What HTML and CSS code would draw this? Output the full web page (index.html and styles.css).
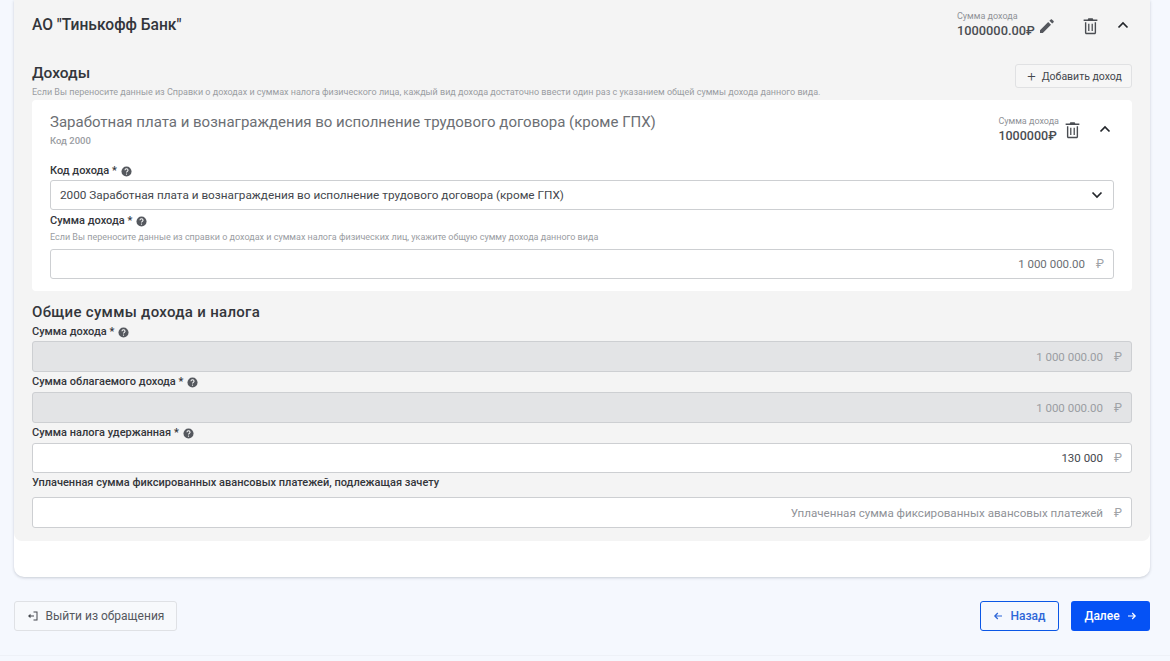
FILE: index.html
```html
<!DOCTYPE html>
<html lang="ru">
<head>
<meta charset="utf-8">
<title>Доходы</title>
<link rel="stylesheet" href="styles.css">
</head>
<body>
<svg class="defs" width="0" height="0" aria-hidden="true">
  <symbol id="trash" viewBox="0 0 14 16"><path d="M5 .8h4l.6 1.2H13.400v1.400H.6V2H4.400zM1.800 4.400v9.800c0 .8.600 1.400 1.400 1.400h7.600c.8 0 1.400-.6 1.400-1.400V4.400h-1.300v9.600c0 .2-.1.300-.3.300H3.400c-.2 0-.3-.1-.3-.3V4.400zM4.800 5.800v6.800h1.200V5.800zM8 5.800v6.800h1.200V5.800z" fill="currentColor"/></symbol>
  <symbol id="up" viewBox="0 0 12 8"><path d="M1.500 6.500 6 2l4.500 4.500" fill="none" stroke="currentColor" stroke-width="1.700"/></symbol>
  <symbol id="help" viewBox="0 0 12 12"><circle cx="6" cy="6" r="5.500" fill="#55585e"/><path d="M4.300 4.700c0-1 .8-1.600 1.700-1.600s1.700.6 1.700 1.500c0 1.200-1.700 1.200-1.700 2.500" fill="none" stroke="#fff" stroke-width="1.100"/><circle cx="6" cy="8.800" r=".7" fill="#fff"/></symbol>
</svg>
<main class="page">
  <section class="card">
    <div class="panel">
      <header class="org">
        <h1 class="org-title">АО "Тинькофф Банк"</h1>
        <div class="org-side">
          <div class="amount amount-org">
            <span class="amount-label">Сумма дохода</span>
            <strong class="amount-value">1000000.00₽</strong>
          </div>
          <svg class="ico-pencil" viewBox="0 0 16 16"><path d="M1 12.200V15h2.800l8.200-8.200-2.800-2.800zM14.600 4.200c.3-.3.300-.8 0-1.100l-1.700-1.700c-.3-.3-.8-.3-1.100 0l-1.400 1.400 2.800 2.800z" fill="#55585e"/></svg>
          <svg class="ico-trash trash-org"><use href="#trash"/></svg>
          <svg class="ico-up up-org"><use href="#up"/></svg>
        </div>
      </header>

      <div class="section-head">
        <div>
          <h2 class="section-title">Доходы</h2>
          <p class="section-hint">Если Вы переносите данные из Справки о доходах и суммах налога физического лица, каждый вид дохода достаточно ввести один раз с указанием общей суммы дохода данного вида.</p>
        </div>
        <button class="btn btn-add"><span class="plus">+</span>Добавить доход</button>
      </div>

      <article class="income">
        <div class="income-head">
          <div>
            <h3 class="income-title">Заработная плата и вознаграждения во исполнение трудового договора (кроме ГПХ)</h3>
            <div class="income-code">Код 2000</div>
          </div>
          <div class="income-side">
            <div class="amount amount-income">
              <span class="amount-label">Сумма дохода</span>
              <strong class="amount-value">1000000₽</strong>
            </div>
            <svg class="ico-trash trash-income"><use href="#trash"/></svg>
            <svg class="ico-up up-income"><use href="#up"/></svg>
          </div>
        </div>
        <label class="label label-first">Код дохода * <svg class="help"><use href="#help"/></svg></label>
        <div class="field field-select">
          <span>2000 Заработная плата и вознаграждения во исполнение трудового договора (кроме ГПХ)</span>
          <svg class="ico-down" viewBox="0 0 12 8"><path d="M1.500 1.500 6 6l4.500-4.500" fill="none" stroke="#23262b" stroke-width="1.700"/></svg>
        </div>
        <label class="label label-sum">Сумма дохода * <svg class="help"><use href="#help"/></svg></label>
        <p class="field-hint">Если Вы переносите данные из справки о доходах и суммах налога физических лиц, укажите общую сумму дохода данного вида</p>
        <div class="field field-num"><span class="val">1 000 000.00</span><span class="rub">₽</span></div>
      </article>

      <h2 class="totals-title">Общие суммы дохода и налога</h2>
      <label class="label label-total">Сумма дохода * <svg class="help"><use href="#help"/></svg></label>
      <div class="field field-num field-off field-tall"><span class="val">1 000 000.00</span><span class="rub">₽</span></div>
      <label class="label label-total">Сумма облагаемого дохода * <svg class="help"><use href="#help"/></svg></label>
      <div class="field field-num field-off field-tall"><span class="val">1 000 000.00</span><span class="rub">₽</span></div>
      <label class="label label-total">Сумма налога удержанная * <svg class="help"><use href="#help"/></svg></label>
      <div class="field field-num"><span class="val val-dark">130 000</span><span class="rub">₽</span></div>
      <label class="label label-total label-last">Уплаченная сумма фиксированных авансовых платежей, подлежащая зачету</label>
      <div class="field field-num field-tall"><span class="val val-ph">Уплаченная сумма фиксированных авансовых платежей</span><span class="rub">₽</span></div>
    </div>
  </section>

  <nav class="actions">
    <button class="btn btn-exit">
      <svg class="ico-exit" viewBox="0 0 12 12"><path d="M6.500 1.500h4v9h-4v-1h3v-7h-3zM1 6l2.500-2.200v1.600H7v1.200H3.500v1.600z" fill="#44474d"/></svg>
      Выйти из обращения
    </button>
    <div class="actions-right">
      <button class="btn btn-back"><svg class="ico-arrow" viewBox="0 0 10 10"><path d="M9 5H1.800M4.800 2 1.800 5l3 3" fill="none" stroke="currentColor" stroke-width="1.200"/></svg>Назад</button>
      <button class="btn btn-next">Далее<svg class="ico-arrow" viewBox="0 0 10 10"><path d="M1 5h7.200M5.200 2l3 3-3 3" fill="none" stroke="currentColor" stroke-width="1.200"/></svg></button>
    </div>
  </nav>
</main>
<div class="footer-line"></div>
</body>
</html>
```
FILE: styles.css
```css
* { box-sizing: border-box; }
html, body { margin: 0; height: 661px; overflow: hidden; }
body { background: #f5f8fe; font-family: Roboto, "Liberation Sans", sans-serif; color: #33363b; }
.defs { position: absolute; }
.page { padding: 0 20px 0 14px; }
.card { height: 577px; background: #fff; border-radius: 0 0 10px 10px; box-shadow: 0 1px 3px rgba(40, 50, 70, .22); }
.panel { height: 541px; background: #f4f4f4; border-radius: 0 0 8px 8px; padding: 0 18px; }

.org { height: 64px; display: flex; justify-content: space-between; align-items: flex-start; }
.org-title { margin: 16px 0 0; font-size: 15.600px; line-height: 18px; font-weight: 500; color: #33363b; }
.org-side { display: flex; align-items: flex-start; margin-top: 11px; }
.amount { display: flex; flex-direction: column; }
.amount-label { font-size: 9px; line-height: 11px; color: #8f9297; }
.amount-value { font-size: 12.800px; line-height: 17px; font-weight: 500; color: #4a4d52; }
.amount-income .amount-value { font-size: 12.500px; }
.amount-org { width: 79px; }
.ico-pencil { width: 16px; height: 16px; margin: 7px 0 0 3px; }
.ico-trash { width: 14px; height: 16px; color: #4a4d52; display: block; }
.trash-org { margin: 6px 0 0 28px; width: 15px; height: 18px; }
.ico-up { width: 12px; height: 8px; color: #23262b; display: block; }
.up-org { margin: 10px 3px 0 19px; }

.section-head { display: flex; justify-content: space-between; align-items: flex-start; height: 36px; }
.section-title { margin: 0; font-size: 15.500px; line-height: 18px; font-weight: 500; color: #33363b; }
.section-hint { margin: 4px 0 0; font-size: 9px; line-height: 12px; color: #9a9da2; white-space: nowrap; }

.btn { font-family: inherit; display: flex; align-items: center; justify-content: center; border-radius: 3px; cursor: pointer; }
.btn-add { width: 117px; height: 24px; background: #f6f6f6; border: 1px solid #e0e1e3; font-size: 10.500px; color: #44474d; padding-left: 8px; }
.plus { font-size: 15px; line-height: 14px; margin-right: 6px; font-weight: 300; }

.income { height: 191px; background: #fff; border-radius: 4px; padding: 0 18px; }
.income-head { height: 64px; display: flex; justify-content: space-between; }
.income-title { margin: 12px 0 0; font-size: 15px; line-height: 20px; font-weight: 400; color: #6c6f74; }
.income-code { margin-top: 3px; font-size: 9.500px; line-height: 12px; font-weight: 500; color: #9a9da2; }
.income-side { display: flex; align-items: flex-start; margin-top: 16px; }
.trash-income { margin: 5px 0 0 6px; width: 15px; height: 18px; }
.up-income { margin: 9px 3px 0 19px; }

.label { display: flex; align-items: center; gap: 1px; font-size: 11px; line-height: 14px; height: 14px; font-weight: 500; color: #33363b; white-space: pre; }
.label-first { margin-bottom: 2px; }
.label-sum { margin-top: 4px; }
.label-total { margin: 3px 0; }
.label-last { margin-bottom: 7px; }
.help { width: 11px; height: 11px; }

.field { height: 30px; background: #fff; border: 1px solid #cdcfd2; border-radius: 3px; display: flex; align-items: center; font-size: 11.500px; }
.field-select { justify-content: space-between; padding: 0 10px 0 9px; color: #44474d; font-size: 11.750px; }
.ico-down { width: 12px; height: 8px; }
.field-hint { margin: 4px 0 6px; font-size: 9px; line-height: 11px; color: #9a9da2; }
.field-num { justify-content: flex-end; padding: 0 9px 0 10px; }
.field-tall { height: 31px; }
.field-off { background: #e3e4e6; }
.val { color: #6c6f74; }
.val-dark { color: #44474d; }
.val-ph { color: #8f9297; font-size: 11.600px; }
.field-off .val { color: #9a9da2; }
.rub { color: #a0a3a7; margin-left: 11px; font-size: 12px; }

.totals-title { margin: 12px 0 4px; font-size: 15px; line-height: 18px; font-weight: 500; letter-spacing: .3px; color: #33363b; }
.totals-title + .label-total { margin: 0 0 2px; }

.actions { display: flex; justify-content: space-between; margin-top: 24px; }
.actions-right { display: flex; gap: 12px; }
.btn-exit { width: 163px; height: 30px; background: #f7f9fc; border: 1px solid #dfe1e5; font-size: 12px; color: #55585e; gap: 7px; }
.ico-exit { width: 12px; height: 12px; }
.btn-back { width: 79px; height: 30px; background: #f5f8fe; border: 1px solid #0b57e6; font-size: 12px; font-weight: 500; color: #2d66d8; gap: 7px; }
.btn-next { width: 79px; height: 30px; background: #0552f5; border: 0; font-size: 12px; font-weight: 500; color: #fff; gap: 7px; }
.ico-arrow { width: 10px; height: 10px; }
.footer-line { margin-top: 24px; height: 1px; background: #eef1f7; }
```
